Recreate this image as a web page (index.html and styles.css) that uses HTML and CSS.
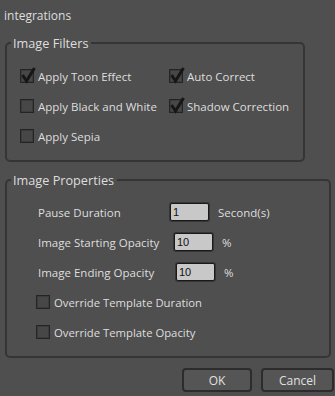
FILE: index.html
```html
<!DOCTYPE html>
<html lang="en">

<head>
    <meta charset="UTF-8">
    <title>integrations</title>
    <link rel="stylesheet" href="styles.css">
</head>

<body>
    <div class="dialog">
        <div class="title">integrations</div>

        <fieldset class="group filters">
            <legend>Image Filters</legend>
            <div class="filter-grid">
                <label class="check"><span class="box checked"><svg viewBox="0 0 12 12"><path d="M1.5 5 L5.5 11 L13.5 -2" /></svg></span>Apply Toon Effect</label>
                <label class="check"><span class="box checked"><svg viewBox="0 0 12 12"><path d="M1.5 5 L5.5 11 L13.5 -2" /></svg></span>Auto Correct</label>
                <label class="check"><span class="box"></span>Apply Black and White</label>
                <label class="check"><span class="box checked"><svg viewBox="0 0 12 12"><path d="M1.5 5 L5.5 11 L13.5 -2" /></svg></span>Shadow Correction</label>
                <label class="check"><span class="box"></span>Apply Sepia</label>
            </div>
        </fieldset>

        <fieldset class="group props">
            <legend>Image Properties</legend>
            <div class="prop-list">
                <div class="prop-row">
                    <span class="prop-label">Pause Duration</span>
                    <span class="field">1</span>
                    <span class="unit">Second(s)</span>
                </div>
                <div class="prop-row">
                    <span class="prop-label">Image Starting Opacity</span>
                    <span class="field shift-4">10</span>
                    <span class="unit">%</span>
                </div>
                <div class="prop-row">
                    <span class="prop-label">Image Ending Opacity</span>
                    <span class="field shift-6">10</span>
                    <span class="unit">%</span>
                </div>
                <label class="check prop-row"><span class="box"></span>Override Template Duration</label>
                <label class="check prop-row"><span class="box"></span>Override Template Opacity</label>
            </div>
        </fieldset>

        <div class="buttons">
            <button class="btn ok">OK</button>
            <button class="btn cancel">Cancel</button>
        </div>
    </div>
</body>

</html>
```

FILE: styles.css
```css
body {
    margin: 0;
    padding: 0;
    background-color: #4f4f4f;
    font-family: 'Open Sans', sans-serif;
    font-size: 11.5px;
    color: #dedede;
}

.dialog {
    width: 335px;
    height: 396px;
    box-sizing: border-box;
    padding: 8px 0 0 5px;
}

.title {
    line-height: 16px;
    font-size: 12px;
    margin-left: -1px;
}

.group {
    margin: 0;
    padding: 0;
    border: 2px solid #353535;
    border-radius: 5px;
    min-width: 0;
}

.group legend {
    margin-left: 4px;
    padding: 0 3px 0 2px;
    font-size: 12.7px;
    line-height: 16px;
}

.filters {
    width: 300px;
    box-sizing: border-box;
    margin-top: 11px;
}

.props {
    width: 326px;
    box-sizing: border-box;
    margin-top: 10px;
}

.filter-grid {
    display: grid;
    grid-template-columns: 149px auto;
    grid-auto-rows: 30px;
    padding: 10px 0 9px 13px;
}

.check {
    display: flex;
    align-items: center;
    gap: 4px;
}

.box {
    position: relative;
    width: 12px;
    height: 12px;
    border: 1px solid #242424;
    background-color: #474747;
    box-shadow: inset 0 0 0 1px #3c3c3c;
    flex: none;
}

.box svg {
    position: absolute;
    left: 0;
    top: 0;
    width: 12px;
    height: 12px;
    overflow: visible;
}

.box svg path {
    fill: none;
    stroke: #161616;
    stroke-width: 3;
}

.prop-list {
    padding: 9px 0 9px 29px;
}

.prop-row {
    display: flex;
    align-items: center;
    height: 30px;
}

.prop-label {
    width: 132px;
    padding-left: 2px;
    flex: none;
}

.prop-list .check {
    font-size: 11.3px;
}

.field {
    width: 35px;
    height: 16px;
    line-height: 16px;
    padding-left: 2px;
    border: 1px solid #1a1a1a;
    box-shadow: 0 0 0 1px #363636;
    border-radius: 2px;
    background-color: #c8c8c8;
    color: #111;
    font-family: 'Liberation Sans', sans-serif;
    font-size: 11px;
}

.shift-4 {
    margin-left: 4px;
}

.shift-6 {
    margin-left: 6px;
}

.unit {
    margin-left: 9px;
}

.buttons {
    display: flex;
    justify-content: flex-end;
    gap: 9px;
    margin-top: 10px;
    padding-right: 1px;
}

.btn {
    height: 24px;
    border: 2px solid #2c2c2c;
    border-radius: 4px;
    background-color: #555555;
    color: #e0e0e0;
    font-family: 'Open Sans', sans-serif;
    font-size: 12px;
    padding: 0;
}

.ok {
    width: 70px;
}

.cancel {
    width: 73px;
}
```
